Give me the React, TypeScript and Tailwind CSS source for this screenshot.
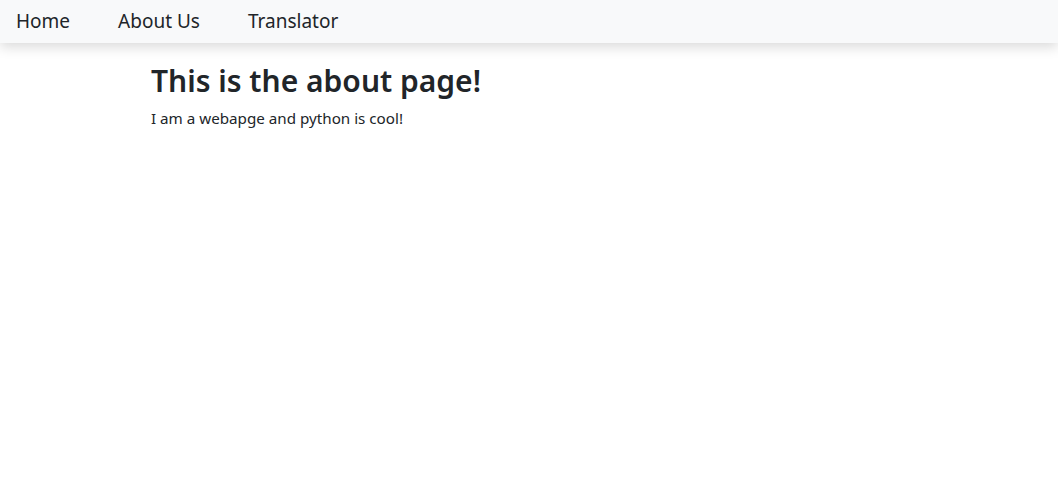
export default function App() {
  return (
    <div className="min-h-[481px] bg-white text-[#212529] font-['Noto_Sans',sans-serif]">
      <nav className="flex h-[43px] items-center bg-[#f8f9fa] px-4 shadow-[0_4px_12px_rgba(0,0,0,0.15)]">
        <ul className="flex items-center gap-[48px] text-[19px] leading-none">
          <li><a href="#">Home</a></li>
          <li><a href="#">About Us</a></li>
          <li><a href="#">Translator</a></li>
        </ul>
      </nav>
      <main className="pl-[151px] pt-[20px]">
        <h1 className="text-[30px] font-semibold leading-[1.2]">This is the about page!</h1>
        <p className="mt-[8px] text-[15.2px]">I am a webapge and python is cool!</p>
      </main>
    </div>
  );
}
